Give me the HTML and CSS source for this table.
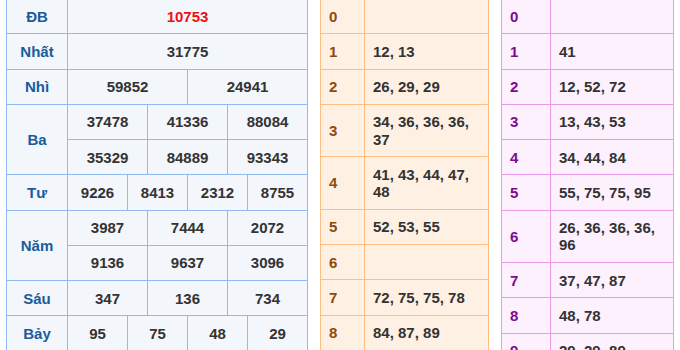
FILE: index.html
```html
<!DOCTYPE html>
<html lang="vi">
<head>
  <meta charset="UTF-8">
  <meta name="viewport" content="width=device-width, initial-scale=1.0">
  <title>Kết quả xổ số</title>
  <link rel="stylesheet" href="styles.css">
</head>
<body>
  <div class="results">
    <!-- Prize table -->
    <table class="prizes">
      <colgroup>
        <col class="label-col">
        <col span="12">
      </colgroup>
      <tr>
        <th>ĐB</th>
        <td colspan="12" class="special">10753</td>
      </tr>
      <tr>
        <th>Nhất</th>
        <td colspan="12">31775</td>
      </tr>
      <tr>
        <th>Nhì</th>
        <td colspan="6">59852</td>
        <td colspan="6">24941</td>
      </tr>
      <tr>
        <th rowspan="2">Ba</th>
        <td colspan="4">37478</td>
        <td colspan="4">41336</td>
        <td colspan="4">88084</td>
      </tr>
      <tr>
        <td colspan="4">35329</td>
        <td colspan="4">84889</td>
        <td colspan="4">93343</td>
      </tr>
      <tr>
        <th>Tư</th>
        <td colspan="3">9226</td>
        <td colspan="3">8413</td>
        <td colspan="3">2312</td>
        <td colspan="3">8755</td>
      </tr>
      <tr>
        <th rowspan="2">Năm</th>
        <td colspan="4">3987</td>
        <td colspan="4">7444</td>
        <td colspan="4">2072</td>
      </tr>
      <tr>
        <td colspan="4">9136</td>
        <td colspan="4">9637</td>
        <td colspan="4">3096</td>
      </tr>
      <tr>
        <th>Sáu</th>
        <td colspan="4">347</td>
        <td colspan="4">136</td>
        <td colspan="4">734</td>
      </tr>
      <tr>
        <th>Bảy</th>
        <td colspan="3">95</td>
        <td colspan="3">75</td>
        <td colspan="3">48</td>
        <td colspan="3">29</td>
      </tr>
    </table>

    <!-- Heads (đầu) -->
    <table class="loto loto-head">
      <tr><th>0</th><td></td></tr>
      <tr><th>1</th><td>12, 13</td></tr>
      <tr><th>2</th><td>26, 29, 29</td></tr>
      <tr><th>3</th><td>34, 36, 36, 36, 37</td></tr>
      <tr><th>4</th><td>41, 43, 44, 47, 48</td></tr>
      <tr><th>5</th><td>52, 53, 55</td></tr>
      <tr><th>6</th><td></td></tr>
      <tr><th>7</th><td>72, 75, 75, 78</td></tr>
      <tr><th>8</th><td>84, 87, 89</td></tr>
      <tr><th>9</th><td>95</td></tr>
    </table>

    <!-- Tails (đuôi) -->
    <table class="loto loto-tail">
      <tr><th>0</th><td></td></tr>
      <tr><th>1</th><td>41</td></tr>
      <tr><th>2</th><td>12, 52, 72</td></tr>
      <tr><th>3</th><td>13, 43, 53</td></tr>
      <tr><th>4</th><td>34, 44, 84</td></tr>
      <tr><th>5</th><td>55, 75, 75, 95</td></tr>
      <tr><th>6</th><td>26, 36, 36, 36, 96</td></tr>
      <tr><th>7</th><td>37, 47, 87</td></tr>
      <tr><th>8</th><td>48, 78</td></tr>
      <tr><th>9</th><td>29, 29, 89</td></tr>
    </table>
  </div>
</body>
</html>
```

FILE: styles.css
```css
/* General */
body {
  margin: 0;
  background: #fff;
  font-family: "Liberation Sans", Arial, sans-serif;
  font-size: 15px;
  font-weight: bold;
  color: #333;
}

.results {
  display: flex;
  align-items: flex-start;
  margin-top: -2px;
  padding-left: 6px;
}

table {
  border-collapse: collapse;
  table-layout: fixed;
}

th,
td {
  padding: 8.5px 0;
  line-height: 17.25px;
}

/* Prize table */
.prizes {
  width: 302px;
  background: #f3f6fa;
}

.prizes th,
.prizes td {
  border: 1px solid #92baf2;
  text-align: center;
}

.prizes .label-col {
  width: 61px;
}

.prizes th {
  color: #1a5b9c;
}

.prizes .special {
  color: #ee1111;
}

/* Loto tables */
.loto th,
.loto td {
  text-align: left;
  padding-left: 8px;
  padding-right: 8px;
}

.loto-head {
  width: 169px;
  margin-left: 12px;
  background: #fff0e4;
}

.loto-head th,
.loto-head td {
  border: 1px solid #ffbd83;
}

.loto-head th {
  width: 27px;
  color: #8e4a0a;
}

.loto-tail {
  width: 173px;
  margin-left: 12px;
  background: #fdf1fd;
}

.loto-tail th,
.loto-tail td {
  border: 1px solid #e99be9;
}

.loto-tail th {
  width: 32px;
  color: #7c0b8e;
}
```
